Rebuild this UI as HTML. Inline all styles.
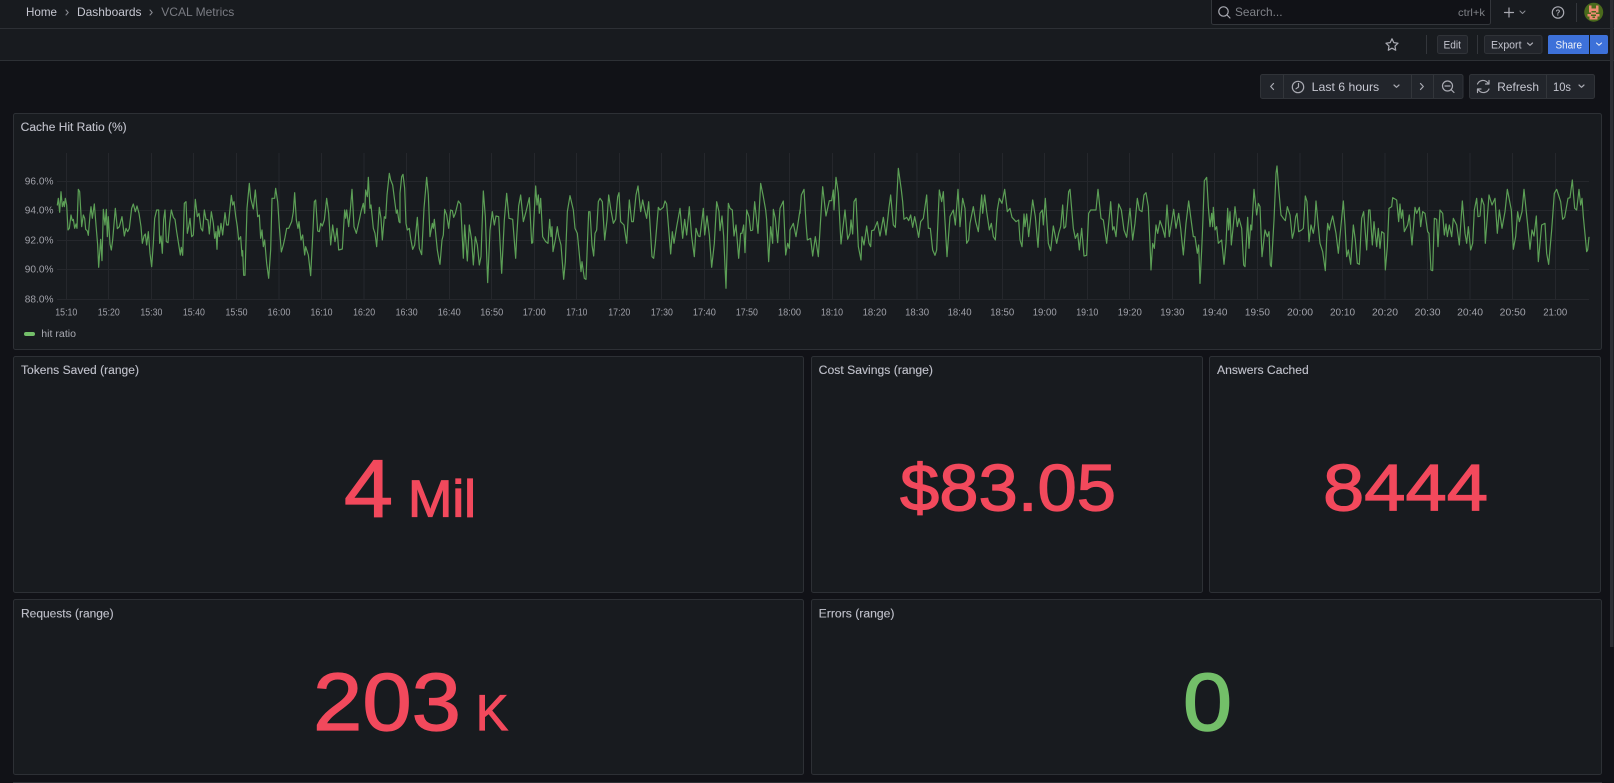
<!DOCTYPE html>
<html lang="en"><head><meta charset="utf-8"><title>VCAL Metrics</title>
<style>
html,body{margin:0;padding:0;background:#111217;width:1614px;height:783px;overflow:hidden}
svg{position:absolute;left:0;top:0;display:block}
text{font-family:"Liberation Sans",sans-serif;fill:#c6c7d1}
.ax{font-size:10px;fill:#a0a1a9}
.ttl{font-size:11.5px;fill:#bfc0ca;stroke:#bfc0ca;stroke-width:.12}
.btn{font-size:11px;fill:#c3c4ce}
.val{fill:#f2495c;stroke:#f2495c;stroke-width:1.2}
.ic{fill:none;stroke:#a9aab2;stroke-width:1.2;stroke-linecap:round;stroke-linejoin:round}
.ic2{fill:none;stroke:#8b8d94;stroke-width:1;stroke-linecap:round;stroke-linejoin:round}
.p{fill:#181b1f;stroke:#2d3035;stroke-width:1}
.tb{fill:#22252b;stroke:#303338;stroke-width:1}
.l{fill:none;stroke:#5c9f56;stroke-width:3.6;stroke-linejoin:round;stroke-linecap:round}
</style></head><body>
<svg width="1614" height="783" viewBox="0 0 1614 783" xmlns="http://www.w3.org/2000/svg">
<rect width="1614" height="783" fill="#111217"/>
<!-- top bars -->
<rect width="1614" height="60" fill="#181b1f"/>
<path d="M0 28.5H1614M0 60.5H1614" stroke="#2d3035" fill="none"/>
<text x="26" y="16" font-size="12" textLength="31" lengthAdjust="spacingAndGlyphs">Home</text>
<path class="ic2" d="M66 10l2.2 2.500-2.200 2.500M150 10l2.200 2.500-2.200 2.500"/>
<text x="77" y="16" font-size="12" textLength="64.500" lengthAdjust="spacingAndGlyphs">Dashboards</text>
<text x="161.300" y="16" font-size="12" textLength="73" lengthAdjust="spacingAndGlyphs" style="fill:#7a7c83">VCAL Metrics</text>
<!-- search -->
<rect x="1211.500" y="-2" width="279" height="26.500" rx="2" fill="#111217" stroke="#33363b"/>
<circle cx="1223.500" cy="11.500" r="4.700" class="ic"/><path class="ic" d="M1227 15l3 3"/>
<text x="1235" y="16" font-size="12" textLength="47.500" lengthAdjust="spacingAndGlyphs" style="fill:#7f8187">Search...</text>
<text x="1458" y="16" font-size="10" textLength="27" lengthAdjust="spacingAndGlyphs" style="fill:#7f8187">ctrl+k</text>
<path class="ic" d="M1504.500 12.500h9M1509 8v9"/>
<path class="ic2" d="M1520 11l2.500 2.500 2.500-2.500"/>
<circle cx="1558" cy="12.500" r="5.700" class="ic"/>
<text x="1558" y="15.500" font-size="8" text-anchor="middle" style="fill:#a9aab2;font-weight:bold">?</text>
<path d="M1576.500 3V22" stroke="#33363b"/>
<!-- avatar -->
<circle cx="1593.700" cy="12.200" r="9.500" fill="#4a6a1c"/>
<path fill="#ee8a72" d="M1589 5.500h2.500v7h-2.500zM1596 5.500h2.500v7h-2.500zM1591 8.500h5v2.500h-5zM1591 12.500h5v2h-5zM1587.500 14h3.500v2.500h-3.500zM1596 14h3.500v2.500h-3.500zM1589.500 16h8v3.500h-8z"/>
<path fill="#4a6a1c" d="M1592.500 16.500h2.500v1.500h-2.500z"/>
<!-- toolbar -->
<path class="ic" d="M1392 38.800l1.800 3.800 4.200.6-3 2.900.7 4.100-3.700-2-3.700 2 .7-4.100-3-2.900 4.200-.6z"/>
<path d="M1426.500 35V54M1477.500 35V54" stroke="#33363b"/>
<rect class="tb" x="1437.500" y="35.500" width="30" height="18" rx="2"/>
<text class="btn" x="1443.500" y="48.500" textLength="17.500" lengthAdjust="spacingAndGlyphs">Edit</text>
<rect class="tb" x="1484.500" y="35.500" width="57.500" height="18" rx="2"/>
<text class="btn" x="1491" y="48.500" textLength="30.500" lengthAdjust="spacingAndGlyphs">Export</text>
<path class="ic" d="M1527.500 43l2.500 2.300 2.500-2.300" stroke-width="1"/>
<path fill="#3d71d9" d="M1550 35h39v19h-41v-17a2 2 0 0 1 2-2zM1590 35h16a2 2 0 0 1 2 2v15a2 2 0 0 1-2 2h-16z"/>
<text x="1555.500" y="48.500" textLength="26.500" lengthAdjust="spacingAndGlyphs" style="font-size:11px;fill:#f2f4f8">Share</text>
<path d="M1596.500 43l2.500 2.300 2.500-2.300" fill="none" stroke="#f2f4f8" stroke-width="1" stroke-linecap="round" stroke-linejoin="round"/>
<!-- time controls -->
<rect class="tb" x="1260.500" y="74.500" width="202.500" height="24" rx="2"/>
<rect class="tb" x="1469.500" y="74.500" width="125" height="24" rx="2"/>
<path d="M1283.500 75V98M1411.500 75V98M1433.500 75V98M1546.500 75V98" stroke="#33363b"/>
<path class="ic" d="M1273.500 83.500l-2.800 3 2.800 3M1420.500 83.500l2.800 3-2.800 3"/>
<circle cx="1298" cy="87" r="5.700" class="ic"/><path class="ic" d="M1298.500 83.500v3.500l-2.500 1.800"/>
<text x="1311.700" y="91" font-size="12" textLength="67.500" lengthAdjust="spacingAndGlyphs">Last 6 hours</text>
<path class="ic" d="M1394 85l2.500 2.300 2.500-2.300" stroke-width="1"/>
<circle cx="1447.500" cy="86" r="5" class="ic"/><path class="ic" d="M1445 86h5M1451.300 89.800l2.700 2.700"/>
<path class="ic" d="M1477.500 84a6 6 0 0 1 10-1.500l1.500 1.500M1489 80.500v3.500H1485.500M1489 89a6 6 0 0 1-10 1.500l-1.500-1.500M1477.500 92.500V89h3.500"/>
<text x="1497.300" y="91" font-size="12" textLength="41.700" lengthAdjust="spacingAndGlyphs">Refresh</text>
<text x="1553" y="91" font-size="12" textLength="18" lengthAdjust="spacingAndGlyphs">10s</text>
<path class="ic" d="M1579 85l2.500 2.300 2.500-2.300" stroke-width="1"/>
<!-- panels -->
<rect class="p" x="13.500" y="113.500" width="1588" height="236" rx="2"/>
<rect class="p" x="13.500" y="356.500" width="790" height="236" rx="2"/>
<rect class="p" x="811.500" y="356.500" width="391" height="236" rx="2"/>
<rect class="p" x="1209.500" y="356.500" width="391" height="236" rx="2"/>
<rect class="p" x="13.500" y="599.500" width="790" height="175" rx="2"/>
<rect class="p" x="811.500" y="599.500" width="790" height="175" rx="2"/>
<rect x="13" y="782" width="1589" height="3" fill="#2d3035"/>
<rect x="1610" y="0" width="3.500" height="647" fill="#2c2e33"/>
<!-- titles -->
<text class="ttl" x="20.700" y="131" textLength="106" lengthAdjust="spacingAndGlyphs">Cache Hit Ratio (%)</text>
<text class="ttl" x="21" y="374" textLength="118" lengthAdjust="spacingAndGlyphs">Tokens Saved (range)</text>
<text class="ttl" x="818.700" y="374" textLength="114.300" lengthAdjust="spacingAndGlyphs">Cost Savings (range)</text>
<text class="ttl" x="1217" y="374" textLength="91.800" lengthAdjust="spacingAndGlyphs">Answers Cached</text>
<text class="ttl" x="21" y="617.300" textLength="92.600" lengthAdjust="spacingAndGlyphs">Requests (range)</text>
<text class="ttl" x="818.700" y="617.300" textLength="75.800" lengthAdjust="spacingAndGlyphs">Errors (range)</text>
<!-- stat values -->
<text class="val" x="344" y="516.300" font-size="82" textLength="49" lengthAdjust="spacingAndGlyphs">4</text>
<text class="val" x="408" y="516.500" font-size="52" textLength="68" lengthAdjust="spacingAndGlyphs">Mil</text>
<text class="val" x="900" y="510.400" font-size="66" textLength="216" lengthAdjust="spacingAndGlyphs">$83.05</text>
<text class="val" x="1323" y="510.400" font-size="66" textLength="165" lengthAdjust="spacingAndGlyphs">8444</text>
<text class="val" x="313" y="729.800" font-size="82" textLength="148" lengthAdjust="spacingAndGlyphs">203</text>
<text class="val" x="476" y="730" font-size="50" textLength="32" lengthAdjust="spacingAndGlyphs">K</text>
<text x="1183" y="729.800" font-size="82" textLength="49" lengthAdjust="spacingAndGlyphs" style="fill:#73bf69;stroke:#73bf69;stroke-width:1.4">0</text>
<!-- grid -->
<path fill="none" stroke="#ccccdc" stroke-opacity=".075" d="M57 181.500H1589M57 210.500H1589M57 240.500H1589M57 269.500H1589M57 299.500H1589M66.500 153V300M108.500 153V300M151.500 153V300M193.500 153V300M236.500 153V300M279 153V300M321.500 153V300M364 153V300M406.500 153V300M449.500 153V300M491.500 153V300M534.500 153V300M576.500 153V300M619.500 153V300M661.500 153V300M704.500 153V300M746.500 153V300M789.500 153V300M832.500 153V300M874.500 153V300M917 153V300M959.500 153V300M1002.500 153V300M1044.500 153V300M1087.500 153V300M1129.500 153V300M1172.500 153V300M1214.500 153V300M1257.500 153V300M1300 153V300M1342.500 153V300M1385 153V300M1427.500 153V300M1470 153V300M1512.500 153V300M1555.500 153V300"/>
<!-- y axis -->
<g text-anchor="end">
<text class="ax" x="53.500" y="184.500" textLength="28.700" lengthAdjust="spacingAndGlyphs">96.0%</text>
<text class="ax" x="53.500" y="213.500" textLength="28.700" lengthAdjust="spacingAndGlyphs">94.0%</text>
<text class="ax" x="53.500" y="243.500" textLength="28.700" lengthAdjust="spacingAndGlyphs">92.0%</text>
<text class="ax" x="53.500" y="272.500" textLength="28.700" lengthAdjust="spacingAndGlyphs">90.0%</text>
<text class="ax" x="53.500" y="302.500" textLength="28.700" lengthAdjust="spacingAndGlyphs">88.0%</text>
</g>
<!-- x axis -->
<g text-anchor="middle">
<text class="ax" x="66.300" y="315.500" textLength="22" lengthAdjust="spacingAndGlyphs">15:10</text><text class="ax" x="108.800" y="315.500" textLength="22" lengthAdjust="spacingAndGlyphs">15:20</text><text class="ax" x="151.400" y="315.500" textLength="22" lengthAdjust="spacingAndGlyphs">15:30</text><text class="ax" x="193.900" y="315.500" textLength="22" lengthAdjust="spacingAndGlyphs">15:40</text><text class="ax" x="236.500" y="315.500" textLength="22" lengthAdjust="spacingAndGlyphs">15:50</text><text class="ax" x="279" y="315.500" textLength="23" lengthAdjust="spacingAndGlyphs">16:00</text><text class="ax" x="321.500" y="315.500" textLength="22" lengthAdjust="spacingAndGlyphs">16:10</text><text class="ax" x="364.100" y="315.500" textLength="22" lengthAdjust="spacingAndGlyphs">16:20</text><text class="ax" x="406.600" y="315.500" textLength="22" lengthAdjust="spacingAndGlyphs">16:30</text><text class="ax" x="449.200" y="315.500" textLength="23" lengthAdjust="spacingAndGlyphs">16:40</text><text class="ax" x="491.700" y="315.500" textLength="23" lengthAdjust="spacingAndGlyphs">16:50</text><text class="ax" x="534.200" y="315.500" textLength="23" lengthAdjust="spacingAndGlyphs">17:00</text><text class="ax" x="576.800" y="315.500" textLength="21" lengthAdjust="spacingAndGlyphs">17:10</text><text class="ax" x="619.300" y="315.500" textLength="22" lengthAdjust="spacingAndGlyphs">17:20</text><text class="ax" x="661.900" y="315.500" textLength="22" lengthAdjust="spacingAndGlyphs">17:30</text><text class="ax" x="704.400" y="315.500" textLength="23" lengthAdjust="spacingAndGlyphs">17:40</text><text class="ax" x="746.900" y="315.500" textLength="22" lengthAdjust="spacingAndGlyphs">17:50</text><text class="ax" x="789.500" y="315.500" textLength="23" lengthAdjust="spacingAndGlyphs">18:00</text><text class="ax" x="832" y="315.500" textLength="22" lengthAdjust="spacingAndGlyphs">18:10</text><text class="ax" x="874.600" y="315.500" textLength="24" lengthAdjust="spacingAndGlyphs">18:20</text><text class="ax" x="917.100" y="315.500" textLength="24" lengthAdjust="spacingAndGlyphs">18:30</text><text class="ax" x="959.600" y="315.500" textLength="24" lengthAdjust="spacingAndGlyphs">18:40</text><text class="ax" x="1002.200" y="315.500" textLength="24" lengthAdjust="spacingAndGlyphs">18:50</text><text class="ax" x="1044.700" y="315.500" textLength="24" lengthAdjust="spacingAndGlyphs">19:00</text><text class="ax" x="1087.300" y="315.500" textLength="22" lengthAdjust="spacingAndGlyphs">19:10</text><text class="ax" x="1129.800" y="315.500" textLength="24" lengthAdjust="spacingAndGlyphs">19:20</text><text class="ax" x="1172.300" y="315.500" textLength="24" lengthAdjust="spacingAndGlyphs">19:30</text><text class="ax" x="1214.900" y="315.500" textLength="25" lengthAdjust="spacingAndGlyphs">19:40</text><text class="ax" x="1257.400" y="315.500" textLength="25" lengthAdjust="spacingAndGlyphs">19:50</text><text class="ax" x="1300" y="315.500" textLength="26" lengthAdjust="spacingAndGlyphs">20:00</text><text class="ax" x="1342.500" y="315.500" textLength="25" lengthAdjust="spacingAndGlyphs">20:10</text><text class="ax" x="1385" y="315.500" textLength="26" lengthAdjust="spacingAndGlyphs">20:20</text><text class="ax" x="1427.600" y="315.500" textLength="26" lengthAdjust="spacingAndGlyphs">20:30</text><text class="ax" x="1470.100" y="315.500" textLength="26" lengthAdjust="spacingAndGlyphs">20:40</text><text class="ax" x="1512.700" y="315.500" textLength="26" lengthAdjust="spacingAndGlyphs">20:50</text><text class="ax" x="1555.200" y="315.500" textLength="24" lengthAdjust="spacingAndGlyphs">21:00</text>
</g>
<!-- legend -->
<rect x="24" y="332" width="11" height="4" rx="2" fill="#73bf69"/>
<text class="ax" x="41.300" y="337" textLength="34.700" lengthAdjust="spacingAndGlyphs" style="fill:#a9aab2">hit ratio</text>
<!-- series -->
<g transform="translate(0 130) scale(.33333)">
<polyline class="l" points="172,225 175,205 179,247 183,185 187,230 191,215 193,230 196,205 200,225 204,300 208,295 213,255 217,272 220,268 224,295 228,282 231,295 235,178 239,185 245,290 250,255 254,265 257,298 262,303 265,316 270,255 273,230 277,265 283,222 288,285 293,345 296,412 302,328 306,392 310,238 315,285 319,238 322,320 325,260 330,342 334,360 338,330 346,235 352,296 358,290 366,260 373,318 378,295 383,305 388,295 395,235 400,222 406,245 411,228 417,250 423,290 427,340 432,318 436,312 440,345 445,305 450,370 455,410 460,340 464,265 470,240 476,240 479,340 483,318 487,370 491,268 495,240 499,335 504,338 509,280 514,240 520,262 525,268 530,305 534,330 541,375 544,352 548,376 553,220 558,215 562,310 566,290 570,265 575,320 580,315 586,208 592,260 597,250 603,295 608,303 613,240 618,268 624,270 628,312 634,245 640,280 644,325 648,305 651,358 654,288 658,320 663,280 668,315 675,248 680,285 685,285 694,196 698,225 702,215 707,258 712,290 716,330 722,320 726,378 728,362 731,436 735,436 741,235 748,160 752,205 760,237 766,180 773,260 778,255 782,325 786,300 790,350 794,330 800,400 806,445 812,360 816,205 824,205 827,175 833,215 838,290 844,366 850,345 855,322 860,295 866,295 875,275 880,245 884,188 889,270 894,295 897,275 903,330 908,315 914,375 917,350 925,375 932,437 938,320 943,215 947,210 953,303 958,305 962,280 967,288 973,270 980,205 986,250 992,345 998,285 1005,335 1008,318 1011,295 1016,360 1027,357 1034,240 1037,265 1040,240 1046,290 1051,240 1056,178 1062,290 1069,310 1079,265 1083,245 1090,220 1094,250 1097,180 1102,200 1105,142 1110,235 1113,225 1120,295 1125,310 1130,350 1138,232 1143,265 1147,330 1153,260 1157,265 1161,195 1168,130 1172,150 1178,165 1185,220 1189,250 1192,240 1197,275 1200,278"/>
</g>
<g transform="translate(400 130) scale(.33333)">
<polyline class="l" points="0,278 0,190 5,140 9,133 14,175 18,280 22,300 28,295 32,325 38,358 44,345 52,262 58,355 65,374 72,235 80,142 85,195 90,320 97,280 100,295 103,268 108,320 112,360 118,395 120,403 126,330 130,315 134,238 140,255 146,295 152,240 157,242 161,262 166,250 175,213 182,222 190,385 194,285 202,393 208,285 215,330 220,405 226,320 232,345 238,405 243,380 250,183 256,260 263,458 270,300 277,245 283,285 288,258 296,260 305,430 313,270 320,190 327,265 338,268 347,385 350,322 356,228 362,195 370,275 378,245 388,203 395,340 398,338 407,168 411,225 415,195 418,250 422,205 428,320 437,335 444,340 449,268 453,320 456,290 459,365 466,330 472,290 476,318 483,345 491,448 496,395 502,245 510,197 520,240 525,295 532,310 543,425 546,395 553,445 558,448 566,245 570,245 576,345 581,378 585,310 590,300 595,215 600,205 607,215 614,330 621,270 626,195 632,235 640,280 647,268 653,200 657,188 662,275 672,285 680,340 688,210 695,275 700,275 708,195 714,168 722,245 728,210 733,235 740,265 746,215 756,380 761,385 766,340 775,232 780,240 790,232 795,213 800,222 812,372 817,305 822,340 830,290 840,235 848,325 854,268 860,315 868,230 875,320 883,380 888,295 895,318 900,320 910,235 914,315 921,258 928,315 935,412 943,340 950,215 957,245 960,302 966,258 971,318 978,475 985,220 990,235 997,240 1002,318 1008,285 1016,385 1022,310 1026,310 1031,285 1035,368 1040,240 1047,260 1052,302 1058,300 1064,215 1074,310 1082,160 1090,200 1097,240 1100,270 1106,395 1112,290 1118,340 1120,238 1126,265 1133,338 1140,235 1150,213 1157,375 1163,340 1168,355 1170,300 1175,290 1180,280 1188,320 1200,240"/>
</g>
<g transform="translate(800 130) scale(.33333)">
<polyline class="l" points="0,250 4,195 12,178 18,280 22,330 32,325 38,378 46,320 55,380 60,300 68,170 78,258 88,212 95,212 100,180 102,240 108,142 115,190 123,342 135,240 143,328 150,310 153,270 158,312 162,215 168,205 175,350 183,390 186,320 192,345 200,288 207,340 212,350 215,302 222,300 232,275 240,318 250,262 258,315 267,232 272,195 280,285 286,292 295,115 304,180 308,215 312,268 320,262 326,272 332,255 338,292 344,260 350,290 356,322 362,275 370,265 380,195 385,295 391,295 398,360 405,376 410,360 418,180 425,215 430,185 441,380 450,260 460,240 466,285 474,178 480,290 488,205 495,235 500,340 506,330 510,280 520,230 527,275 535,305 545,195 548,250 554,195 560,245 568,300 574,280 580,320 586,330 592,240 598,205 606,220 614,178 622,245 630,235 636,262 648,275 656,270 660,330 666,350 672,252 675,290 680,252 686,320 698,210 706,260 714,352 720,250 727,240 730,285 736,205 745,340 752,362 760,288 770,340 776,310 782,290 788,225 792,295 797,290 806,185 810,178 820,295 826,325 833,310 838,360 845,295 852,378 860,376 866,250 872,240 880,240 888,240 894,178 903,265 910,270 920,340 928,260 932,215 938,300 942,290 948,320 956,222 964,240 972,300 980,322 990,235 998,330 1005,280 1012,205 1018,240 1026,245 1032,195 1038,188 1045,230 1050,340 1053,420 1058,340 1063,355 1068,285 1073,310 1080,272 1088,295 1095,322 1101,225 1108,320 1112,295 1121,238 1128,295 1136,250 1142,295 1150,375 1158,280 1166,213 1172,260 1180,320 1185,320 1192,370 1196,345 1200,460"/>
</g>
<g transform="translate(1200 130) scale(.33333)">
<polyline class="l" points="0,460 5,360 8,290 13,152 20,142 25,230 30,290 35,250 38,290 40,232 45,300 50,290 55,340 65,330 72,403 78,340 83,235 86,300 90,245 94,345 100,285 105,230 112,290 117,265 125,295 131,405 135,410 143,262 147,355 152,285 155,300 162,178 170,255 175,220 180,230 186,380 195,300 202,320 207,305 211,405 214,410 222,270 228,130 231,108 236,175 243,255 250,265 256,272 262,230 270,255 277,325 282,305 287,260 291,250 296,305 305,300 310,295 316,198 321,215 327,335 333,285 340,310 344,285 348,213 355,290 360,340 368,365 376,422 380,325 383,280 388,300 392,280 398,258 408,310 415,370 430,213 435,285 440,380 445,360 452,403 460,285 466,330 472,400 478,403 485,265 491,245 500,360 506,240 510,240 517,345 522,275 530,350 535,295 540,355 545,305 552,310 556,420 562,350 567,235 575,230 578,203 590,210 596,275 600,222 604,265 608,240 613,305 623,285 628,255 636,345 645,232 650,250 658,232 662,290 668,245 675,250 683,305 687,310 693,420 698,422 703,265 710,268 714,350 720,240 728,250 733,315 738,282 742,320 748,285 755,320 760,265 770,285 778,345 787,213 795,310 800,340 805,290 812,360 818,340 823,240 830,205 834,260 840,258 845,205 852,225 856,340 867,195 876,225 885,205 892,310 898,240 906,295 915,245 922,178 934,240 940,358 947,320 953,245 958,275 966,245 972,178 982,275 990,358 996,300 1002,318 1009,258 1015,395 1025,285 1035,280 1040,370 1046,403 1055,300 1063,190 1070,178 1082,215 1088,268 1094,262 1104,205 1110,203 1117,150 1124,235 1130,240 1137,178 1142,225 1146,205 1150,260 1160,365 1163,360 1167,322"/>
</g>
</svg>
</body></html>
